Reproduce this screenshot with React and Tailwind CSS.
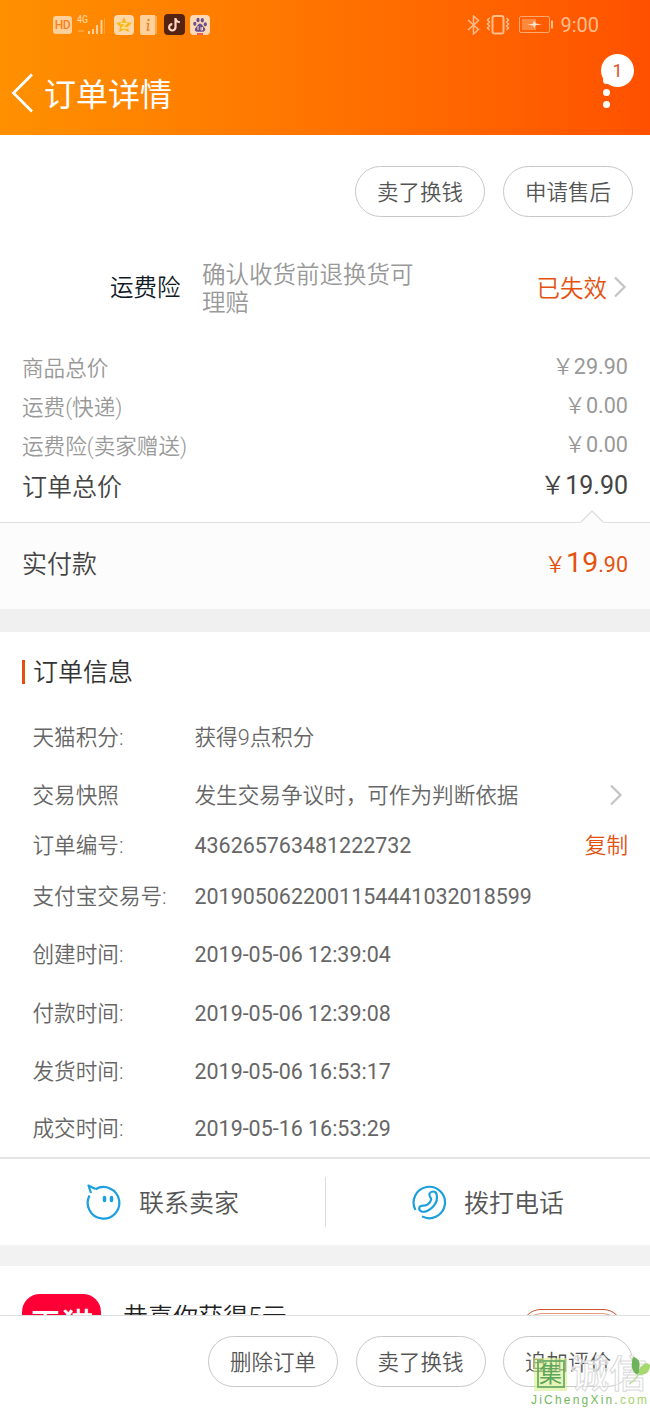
import clsx from 'clsx'

const prices = [
  { label: '商品总价', value: '29.90' },
  { label: '运费(快递)', value: '0.00' },
  { label: '运费险(卖家赠送)', value: '0.00' },
]

const info = [
  { label: '天猫积分:', value: '获得9点积分', cls: 'h-[58px]' },
  { label: '交易快照', value: '发生交易争议时，可作为判断依据', cls: 'h-[58px]', arrow: true },
  { label: '订单编号:', value: '436265763481222732', cls: 'h-[43px]', copy: true },
  { label: '支付宝交易号:', value: '2019050622001154441032018599', cls: 'h-[58px]' },
  { label: '创建时间:', value: '2019-05-06 12:39:04', cls: 'h-[59px]' },
  { label: '付款时间:', value: '2019-05-06 12:39:08', cls: 'h-[58px]' },
  { label: '发货时间:', value: '2019-05-06 16:53:17', cls: 'h-[58px]' },
  { label: '成交时间:', value: '2019-05-16 16:53:29', cls: 'h-[56px]' },
]

function PillButton({ children }) {
  return (
    <button className="h-[51px] w-[130px] shrink-0 rounded-full border border-[#c8c8c8] pt-[3px] text-[21.5px] font-[350] text-[#555]">
      {children}
    </button>
  )
}

function Chevron({ className }) {
  return (
    <svg width="14" height="22" viewBox="0 0 14 22" fill="none" stroke="#c4c4c4" strokeWidth="2.2" className={className}>
      <path d="M2 1.5 11.5 11 2 20.5" />
    </svg>
  )
}

function StatusBar() {
  return (
    <div className="flex h-12 items-center justify-between pl-[53px] pr-[51px] pt-px">
      <div className="flex items-center">
        <span className="flex h-[18px] w-[19px] items-center justify-center rounded-[3px] bg-[#ffd09a] pt-px text-[12px] leading-none font-medium tracking-tight text-[#f58220]">HD</span>
        <svg width="30" height="22" viewBox="0 0 30 22" className="ml-[4px]" fill="#ffd09a">
          <text x="1" y="9" fontSize="10" fontWeight="500" fontFamily="Roboto" textLength="11" lengthAdjust="spacingAndGlyphs">4G</text>
          <path d="M12 17h2v3h-2zM16 15h2v5h-2zM20 11h2v9h-2zM24.500 6h2v14h-2z" />
          <path d="M28 4h1v16h-1zM2 16h6v2h-6z" opacity=".35" />
        </svg>
        <svg width="20" height="20" viewBox="0 0 20 20" className="ml-[8px]">
          <rect width="20" height="20" rx="4" fill="#ffd7ab" />
          <path d="m10 2 2.400 5 5.600.8-4 3.900.9 5.500-4.900-2.600-4.900 2.600.9-5.500-4-3.900 5.600-.8z" fill="#f9b81a" />
          <path d="M6.500 8.500h6L8 13h6" fill="none" stroke="#ffdf9d" strokeWidth="1.300" />
        </svg>
        <svg width="18" height="20" viewBox="0 0 18 20" className="ml-[6px]">
          <path d="M2 0h13v20H2a2 2 0 0 1-2-2V2a2 2 0 0 1 2-2z" fill="#ffd09a" />
          <path d="M16 1v18" stroke="#ffd09a" />
          <circle cx="8.500" cy="5" r="1.200" fill="#e58532" />
          <path d="M6.500 8.500h2L7.500 15h2" fill="none" stroke="#e58532" strokeWidth="1.500" />
        </svg>
        <svg width="21" height="21" viewBox="0 0 21 21" className="ml-[6px]">
          <rect width="21" height="21" rx="4" fill="#552313" />
          <path d="M11.500 4v9.300a3.200 3.200 0 1 1-3.200-3.200M11.500 4c.2 2.500 2 4 4.300 4.200" fill="none" stroke="#ffd8c4" strokeWidth="2.200" />
        </svg>
        <svg width="20" height="20" viewBox="0 0 20 20" className="ml-[5px]">
          <rect width="20" height="20" rx="4" fill="#ffd9b5" />
          <g fill="#68508f">
            <ellipse cx="4.800" cy="8.800" rx="1.600" ry="2.100" />
            <ellipse cx="8" cy="5" rx="1.600" ry="2.200" />
            <ellipse cx="12.300" cy="5.200" rx="1.600" ry="2.200" />
            <ellipse cx="15.300" cy="9.300" rx="1.600" ry="2.100" />
            <path d="M10 8.500c2 0 2.500 2.500 4.500 4.200 2 2-.2 4-2 4H7.500c-2 0-3.800-2-1.800-4C7.500 11 8 8.500 10 8.500z" />
          </g>
          <path d="M8 11v4M11 12v3h1.500v-3" fill="none" stroke="#ffd9b5" />
          <path d="M7 19h6" stroke="#e33" strokeWidth="1.500" />
        </svg>
      </div>
      <div className="flex items-center text-[#ffbd8c]">
        <svg width="13" height="20" viewBox="0 0 13 20" fill="none" stroke="currentColor" strokeWidth="1.500">
          <path d="m1 5 10.500 9.500-5 4.500V1l5 4.500L1 15" />
        </svg>
        <svg width="25" height="20" viewBox="0 0 25 20" fill="none" stroke="currentColor" className="ml-[6px]">
          <rect x="6.500" y="1" width="11" height="17.500" rx="2" strokeWidth="2" />
          <path d="m3.500 3-2 2 2 2-2 2 2 2-2 2 2 2M20.500 3l2 2-2 2 2 2-2 2 2 2-2 2" strokeWidth="1.500" />
        </svg>
        <svg width="35" height="17" viewBox="0 0 35 17" className="ml-[8px]">
          <rect x=".5" y=".5" width="30" height="16" rx="1.500" fill="none" stroke="currentColor" opacity=".8" />
          <path d="M3 3h14v11H3z" fill="currentColor" opacity=".45" />
          <path d="m8 8.500 6-.7 1-3.300 2 3 6 1-6.500.7-1 3.300-1.500-3z" fill="#ffe3cc" />
          <path d="M32 4.500h2v8h-2z" fill="currentColor" />
        </svg>
        <span className="ml-[6px] text-[20px] leading-none font-normal">9:00</span>
      </div>
    </div>
  )
}

function Header() {
  return (
    <header className="relative h-[135px] shrink-0 bg-linear-to-r from-[#ff9000] to-[#ff5000]">
      <StatusBar />
      <div className="flex h-[90px] items-center pl-[11px] text-white">
        <svg width="24" height="40" viewBox="0 0 24 40" fill="none" stroke="currentColor" strokeWidth="2.800" className="-mt-px">
          <path d="M21 1.500 2.500 20 21 38.500" />
        </svg>
        <h1 className="mt-[3px] ml-[9px] text-[32px] leading-none font-normal">订单详情</h1>
      </div>
      <span className="absolute top-[77px] left-[603px] size-[7px] rounded-full bg-white" />
      <span className="absolute top-[89px] left-[603px] size-[7px] rounded-full bg-white" />
      <span className="absolute top-[101px] left-[603px] size-[7px] rounded-full bg-white" />
      <span className="absolute top-[54px] left-[601px] flex size-[33px] items-center justify-center rounded-full bg-white text-[18px] text-[#d9541e]">1</span>
    </header>
  )
}

function Insurance() {
  return (
    <div className="mt-[43px] flex h-14 items-center pl-[110px] pr-[23px] text-[23.5px] font-[350]">
      <span className="w-[92px] pt-[2px] text-[#111b26]">运费险</span>
      <p className="w-[216px] pt-px leading-7 text-[#999]">确认收货前退换货可理赔</p>
      <span className="ml-auto pt-[3px] text-[#e4510f]">已失效</span>
      <Chevron className="-mt-[3px] ml-[6px]" />
    </div>
  )
}

function Prices() {
  return (
    <section className="mt-[34px] px-[22px] font-[350]">
      {prices.map((p) => (
        <div key={p.label} className="flex h-[39px] items-center justify-between text-[21.6px] text-[#999]">
          <span>{p.label}</span>
          <span className="-mt-[4px] font-normal"><i className="font-[350] not-italic">￥</i>{p.value}</span>
        </div>
      ))}
      <div className="flex h-[41px] items-center justify-between text-[25px] text-[#444]">
        <span>订单总价</span>
        <span className="-mt-[4px] font-normal"><i className="font-[350] not-italic">￥</i>19.90</span>
      </div>
    </section>
  )
}

function Paid() {
  return (
    <section className="relative mt-[14px] flex h-[87px] items-center justify-between border-t border-[#dedede] bg-[#fcfcfc] px-[22px] pb-[4px]">
      <svg width="24" height="13" viewBox="0 0 24 13" className="absolute -top-[13px] left-[580px]">
        <path d="M0 12.500 12 .8 24 12.500V13H0z" fill="#fcfcfc" />
        <path d="M.5 12.500 12 1l11.500 11.500" fill="none" stroke="#dedede" strokeWidth="1.300" />
      </svg>
      <span className="pt-px text-[25px] font-[350] text-[#444]">实付款</span>
      <span className="-mt-px text-[21.5px] text-[#e4510f]">
        <i className="font-[350] not-italic">￥</i><b className="text-[28.5px] font-normal">19</b>.90
      </span>
    </section>
  )
}

function OrderInfo() {
  return (
    <section className="border-t-[23px] border-[#f0f0f0] font-[350]">
      <div className="flex h-[77px] items-center pl-[22px] pt-[5px]">
        <span className="-mt-[3px] h-6 w-[3px] bg-[#e4510f]" />
        <h2 className="ml-[8px] text-[25px] font-[350] text-[#333]">订单信息</h2>
      </div>
      {info.map((row) => (
        <div key={row.label} className={clsx('flex items-center pl-[32.5px] pr-[22px] text-[21.6px] text-[#666]', row.cls)}>
          <span className="w-[162px] shrink-0">{row.label}</span>
          <span className={clsx('whitespace-nowrap', /^\d/.test(row.value) && 'text-[21.45px] font-normal')}>{row.value}</span>
          {row.arrow && <Chevron className="-mt-[3px] mr-[5px] ml-auto" />}
          {row.copy && <span className="ml-auto text-[#e4510f]">复制</span>}
        </div>
      ))}
    </section>
  )
}

function Contacts() {
  return (
    <div className="flex h-[88px] shrink-0 items-center border-t-2 border-[#e4e4e4] text-[25px] font-[350] text-[#555]">
      <div className="flex h-[50px] w-[326px] items-center border-r border-[#dcdcdc] pl-[86px]">
        <svg width="36" height="36" viewBox="0 0 36 36" fill="none" stroke="#1b9fdd" strokeWidth="2.200">
          <path d="M9.500 5.200A15.800 15.800 0 1 1 3.500 11.500M5 9 2.500 1.500l7 3.500" strokeLinejoin="round" />
          <path d="M18.500 13.500v3M25.500 13.500v3" strokeWidth="3.500" strokeLinecap="round" />
        </svg>
        <span className="mt-[3px] ml-[17px]">联系卖家</span>
      </div>
      <div className="flex items-center pl-[85px]">
        <svg width="36" height="36" viewBox="0 0 36 36" fill="none" stroke="#1b9fdd" strokeWidth="2.200">
          <path d="M4.500 26A15.700 15.700 0 1 1 11 32.400" />
          <path d="M18.500 9.500c1.500-2.500 6-3 7 .5 1.500 5-.5 9.500-3.500 12.800-3.500 3.700-8.500 5.700-11.500 4.700-3-1.200-3.200-5 .2-5.800 2.300-.5 3.700.4 5.700-1.100 2-1.500 3.500-3 3.800-5 .3-2-3-3.500-1.700-6.100z" />
        </svg>
        <span className="mt-[3px] ml-[17px]">拨打电话</span>
      </div>
    </div>
  )
}

function Promo() {
  return (
    <section className="flex h-[70px] shrink-0 items-start overflow-hidden border-t-[21px] border-[#f2f2f2] pl-[22px]">
      <div className="mt-[28px] flex h-[79px] w-[79px] shrink-0 justify-center rounded-[18px] bg-[#ff0036] pt-[13px] text-[32px] leading-[36px] font-medium whitespace-nowrap text-white">
        天猫
      </div>
      <span className="mt-[34px] ml-[22px] text-[25px] leading-[36px] font-[350] text-[#222]">恭喜你获得5元</span>
      <div className="mt-[43px] mr-[27px] ml-auto h-[50px] w-[102px] rounded-[20px] border border-[#cf542a] p-[3px]">
        <div className="h-10 rounded-2xl border border-[#e79a7c]" />
      </div>
    </section>
  )
}

function Watermark() {
  return (
    <div className="pointer-events-none absolute bottom-0 left-[531px] w-[119px] overflow-hidden">
      <div className="flex items-center pl-[3px]">
        <span className="flex size-[33px] items-center justify-center bg-[#d6f08a]/60">
          <span className="flex size-7 items-center justify-center border-2 border-[#5da45c]/80 text-[23px] leading-none font-normal text-[#5da45c]">集</span>
        </span>
        <span className="ml-[4px] text-[38px] leading-[38px] font-medium whitespace-nowrap text-white/60 [-webkit-text-stroke:1px_#dadada]">诚信</span>
      </div>
      <svg width="22" height="28" viewBox="0 0 22 28" className="absolute top-[2px] right-0">
        <path d="M5 0c7 2 7 6 6 12 5-6 8-7 11-4 0 7-4 10-11 10-6-1-9-8-6-18z" fill="#a5d86e" />
        <path d="M5 0c7 2 7 6 6 12v6C5 17 2 10 5 0z" fill="#6db35b" />
        <path d="M11 16c-2 5-5 8-10 11" fill="none" stroke="#b9dca0" strokeWidth="1.500" />
      </svg>
      <div className="h-[15px] font-['Liberation_Sans',sans-serif] text-[12px] leading-[14px] tracking-[2.200px] text-[#72b85d]">JiChengXin.<span className="text-[#a4d46a]">com</span></div>
    </div>
  )
}

export default function App() {
  return (
    <div className="relative flex h-[1408px] w-[650px] flex-col overflow-hidden bg-white font-[Roboto,'Noto_Sans_CJK_SC',sans-serif]" lang="zh-CN">
      <Header />
      <div className="mt-[31px] flex justify-end gap-[18px] pr-[17px]">
        <PillButton>卖了换钱</PillButton>
        <PillButton>申请售后</PillButton>
      </div>
      <Insurance />
      <Prices />
      <Paid />
      <OrderInfo />
      <Contacts />
      <Promo />
      <footer className="flex h-[93px] shrink-0 items-center justify-end gap-[17.5px] border-t border-[#dedede] bg-white pr-[17px] pb-px">
        <PillButton>删除订单</PillButton>
        <PillButton>卖了换钱</PillButton>
        <PillButton>追加评价</PillButton>
      </footer>
      <Watermark />
    </div>
  )
}
